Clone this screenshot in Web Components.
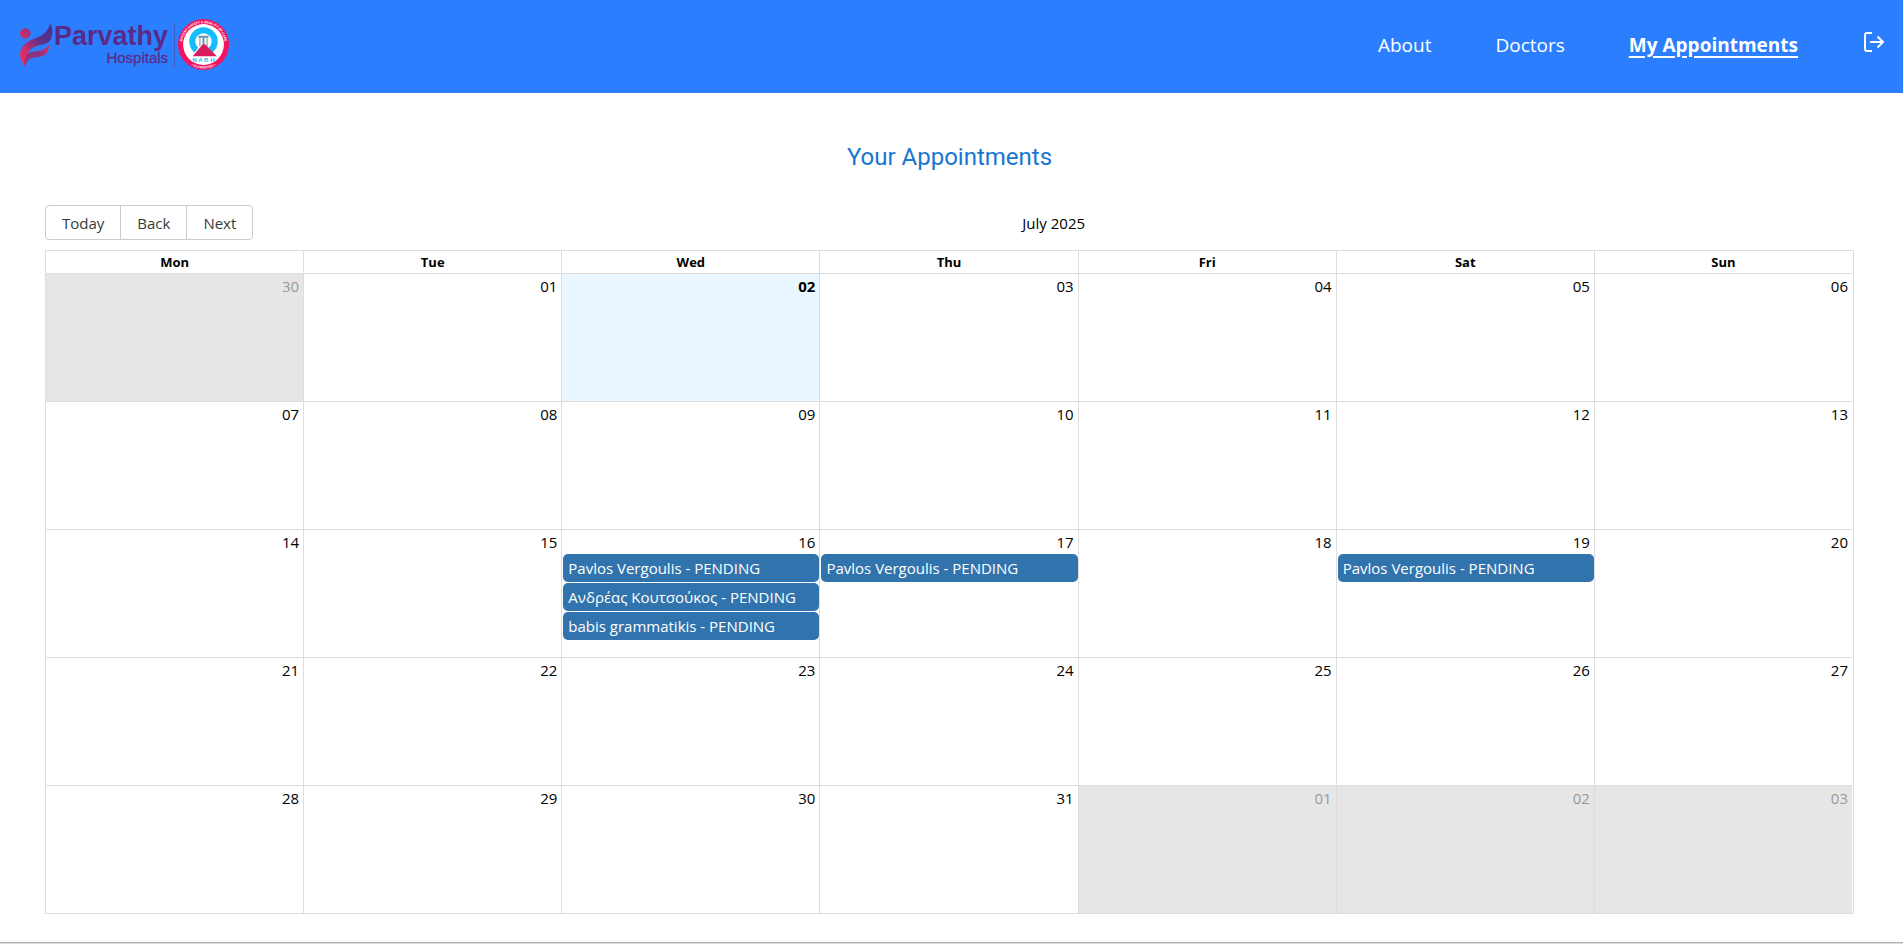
<!DOCTYPE html>
<html lang="en">
<head>
<meta charset="utf-8">
<title>My Appointments</title>
<style>
  body { margin: 0; background: #fff; color: #000; font: 15px/24px "Open Sans", "Noto Sans", sans-serif; }
</style>
</head>
<body>
<app-shell>
  <site-header slot="header">
    <nav-link href="#about">About</nav-link>
    <nav-link href="#doctors">Doctors</nav-link>
    <nav-link href="#appointments" current>My Appointments</nav-link>
  </site-header>
  <appointment-calendar></appointment-calendar>
</app-shell>
<script>
class Base extends HTMLElement {
  constructor() {
    super();
    this.attachShadow({ mode: "open" });
  }
  connectedCallback() { this.shadowRoot.innerHTML = this.render(); }
}

customElements.define("app-shell", class extends Base {
  render() {
    return `<style>
      :host { display: flex; flex-direction: column; min-height: 100vh; }
      main { flex: 1; padding: 48px 49px 28px 45px; }
      h1 { margin: 0 0 32px; text-align: center; font: 400 24px/32px Roboto, sans-serif; color: #1976d2; }
      footer { height: 2px; box-sizing: border-box; border-top: 1px solid #b0b0b0; background: #ddd; }
    </style>
    <slot name="header"></slot>
    <main><h1>Your Appointments</h1><slot></slot></main>
    <footer></footer>`;
  }
});

customElements.define("hospital-logo", class extends Base {
  render() {
    return `<style>
      :host { display: block; }
      a { display: flex; align-items: center; text-decoration: none; color: #5b2a88; font-family: "Liberation Sans", Arial, sans-serif; }
      .mark { width: 36px; height: 48px; }
      .name { display: flex; flex-direction: column; align-items: flex-end; }
      b { font-size: 27px; line-height: 26px; }
      small { font-size: 15px; line-height: 18px; -webkit-text-stroke: 0.3px; }
      .rule { width: 1px; height: 46px; margin: 0 3px 0 6px; background: #3f62cf; }
      .seal { width: 51px; height: 51px; }
    </style>
    <a href="#home" aria-label="Parvathy Hospitals home">
      <svg class="mark" viewBox="18 26 108 144" aria-hidden="true">
        <defs>
          <linearGradient id="g" gradientUnits="userSpaceOnUse" x1="28" y1="140" x2="98" y2="72">
            <stop offset="0" stop-color="#f02b60"/><stop offset=".3" stop-color="#c92f69"/><stop offset=".75" stop-color="#66308a"/><stop offset="1" stop-color="#53308c"/>
          </linearGradient>
          <linearGradient id="h" gradientUnits="userSpaceOnUse" x1="36" y1="150" x2="110" y2="100">
            <stop offset="0" stop-color="#a8307a"/><stop offset=".5" stop-color="#8a2f80"/><stop offset="1" stop-color="#d82d66"/>
          </linearGradient>
          <linearGradient id="d" x1="0" y1="1" x2="1" y2="0"><stop stop-color="#e02d63"/><stop offset="1" stop-color="#86347f"/></linearGradient>
        </defs>
        <circle cx="40" cy="63" r="16" fill="url(#d)"/>
        <path fill="url(#g)" d="M115 32C124 50 124 72 113 86C101 100 78 95 60 108C44 120 44 136 39 163C26 147 20 128 28 110C36 93 52 85 70 78C96 68 108 56 115 32Z"/>
        <path fill="url(#h)" d="M112 97C110 116 104 126 92 131C78 137 62 133 51 142C43 149 42 156 39 163C34 148 38 130 50 123C70 112 92 122 112 97Z"/>
      </svg>
      <span class="name"><b>Parvathy</b><small>Hospitals</small></span>
      <span class="rule"></span>
      <svg class="seal" viewBox="0 0 50 50" aria-hidden="true">
        <defs><path id="top" d="M6.8 35.5A21 21 0 1 1 43.2 35.5"/><path id="bot" d="M1.4 25a23.6 23.6 0 0 0 47.2 0"/></defs>
        <circle cx="25" cy="25" r="25" fill="#f5125f"/>
        <circle cx="25" cy="25" r="20" fill="#fff"/>
        <path fill="none" stroke="#17bdfb" stroke-width="6" d="M18 30.5A11 11 0 1 1 32 30.5"/>
        <path fill="#6f94a8" d="M20 16.500h10v2h-1v8h-1v-8h-2v9h-2v-9h-2v8h-1v-8h-1Z"/>
        <path fill="#d91c5c" d="M24 25h3L38 36.500H14.500Z"/>
        <g fill="#fff" text-anchor="middle" font-family="Liberation Sans, Arial, sans-serif" font-size="3.200" font-weight="700">
          <text><textPath href="#top" startOffset="50%">PATIENT SAFETY &amp; QUALITY OF CARE</textPath></text>
          <text><textPath href="#bot" startOffset="50%">• ACCREDITED •</textPath></text>
        </g>
        <text x="25" y="42" text-anchor="middle" fill="#17bdfb" font-family="Liberation Sans, Arial, sans-serif" font-size="6" font-weight="700">N A B H</text>
      </svg>
    </a>`;
  }
});

customElements.define("nav-link", class extends Base {
  render() {
    return `<style>
      :host { display: block; }
      a { color: #fff; text-decoration: none; font-size: 19px; line-height: 28px; }
      :host([current]) a { font-weight: 700; text-decoration: underline; text-decoration-thickness: 2px; text-underline-offset: 4px; }
    </style>
    <a href="${this.getAttribute("href")}"${this.hasAttribute("current") ? ' aria-current="page"' : ""}><slot></slot></a>`;
  }
});

customElements.define("site-header", class extends Base {
  render() {
    return `<style>
      :host { display: flex; align-items: center; justify-content: space-between; box-sizing: border-box; height: 93px; padding: 0 17px 4px 18px; background: #2b7fff; }
      nav { display: flex; align-items: center; gap: 64px; }
      button { display: block; padding: 0; border: 0; background: none; color: #fff; cursor: pointer; margin-bottom: 6px; }
      svg { display: block; width: 24px; height: 24px; }
    </style>
    <hospital-logo></hospital-logo>
    <nav><slot></slot>
      <button type="button" aria-label="Log out">
        <svg viewBox="0 0 24 24" fill="none" stroke="currentColor" stroke-width="2"><path d="M10 3H5a2 2 0 0 0-2 2v14a2 2 0 0 0 2 2h5M8 12h13M15.500 6.500 21 12l-5.500 5.500"/></svg>
      </button>
    </nav>`;
  }
});

customElements.define("calendar-event", class extends Base {
  render() {
    return `<style>
      :host { display: block; margin: 0 0 1px 1px; }
      button { display: block; width: 100%; box-sizing: border-box; padding: 2px 5px; border: 0; border-radius: 5px; background: #3174ad; color: #fff; font: inherit; line-height: 24px; text-align: left; white-space: nowrap; overflow: hidden; text-overflow: ellipsis; cursor: pointer; }
    </style>
    <button type="button"><slot></slot></button>`;
  }
});

customElements.define("calendar-toolbar", class extends Base {
  render() {
    return `<style>
      :host { display: flex; align-items: center; margin-bottom: 10px; }
      .group { display: flex; }
      button { height: 35px; padding: 0 16px; margin: 0; border: 1px solid #ccc; background: #fff; color: #373a3c; font: inherit; cursor: pointer; }
      button + button { margin-left: -1px; }
      button:first-child { border-radius: 4px 0 0 4px; }
      button:last-child { border-radius: 0 4px 4px 0; }
      .label { flex: 1; text-align: center; }
    </style>
    <div class="group"><button type="button">Today</button><button type="button">Back</button><button type="button">Next</button></div>
    <span class="label"><slot></slot></span>`;
  }
});

customElements.define("appointment-calendar", class extends Base {
  render() {
    const days = ["Mon", "Tue", "Wed", "Thu", "Fri", "Sat", "Sun"];
    const events = {
      16: ["Pavlos Vergoulis - PENDING", "Ανδρέας Κουτσούκος - PENDING", "babis grammatikis - PENDING"],
      17: ["Pavlos Vergoulis - PENDING"],
      19: ["Pavlos Vergoulis - PENDING"]
    };
    const cell = (i) => {
      const d = i === 0 ? 30 : i > 31 ? i - 31 : i;
      const off = i === 0 || i > 31;
      const cls = off ? "off" : i === 2 ? "today" : "";
      const list = off ? [] : events[d] || [];
      return `<td class="${cls}"><div class="date">${String(d).padStart(2, "0")}</div>${list.map(e => `<calendar-event>${e}</calendar-event>`).join("")}</td>`;
    };
    const rows = [0, 1, 2, 3, 4].map(w => `<tr>${days.map((_, d) => cell(w * 7 + d)).join("")}</tr>`).join("");
    return `<style>
      :host { display: block; }
      table { width: 100%; table-layout: fixed; border-collapse: separate; border-spacing: 0; border: 1px solid #ddd; }
      th, td { padding: 0; border-right: 1px solid #ddd; }
      th:last-child, td:last-child { border-right-color: #fff; }
      th { height: 22px; font-size: 13px; line-height: 22px; font-weight: 700; }
      td { height: 127px; border-top: 1px solid #ddd; vertical-align: top; }
      .date { padding-right: 4px; text-align: right; }
      .off { background: #e6e6e6; }
      .off .date { color: #999; }
      .today { background: #eaf6ff; }
      .today .date { font-weight: 700; }
    </style>
    <calendar-toolbar>July 2025</calendar-toolbar>
    <table>
      <thead><tr>${days.map(d => `<th scope="col">${d}</th>`).join("")}</tr></thead>
      <tbody>${rows}</tbody>
    </table>`;
  }
});
</script>
</body>
</html>
